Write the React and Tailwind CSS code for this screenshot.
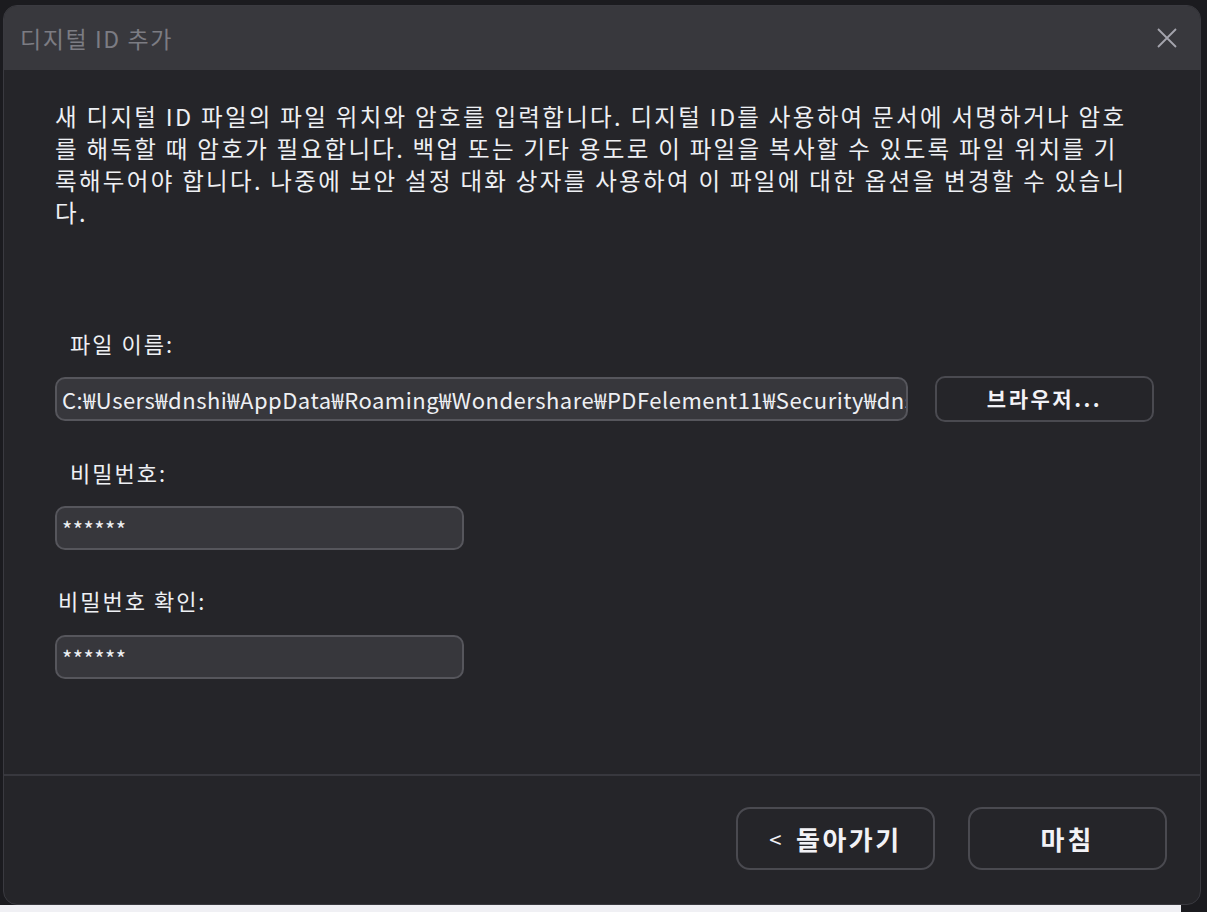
import React from "react";

const font = { fontFamily: '"Noto Sans CJK KR", "Noto Sans", sans-serif' };

const lines = [
  "새 디지털 ID 파일의 파일 위치와 암호를 입력합니다. 디지털 ID를 사용하여 문서에 서명하거나 암호",
  "를 해독할 때 암호가 필요합니다. 백업 또는 기타 용도로 이 파일을 복사할 수 있도록 파일 위치를 기",
  "록해두어야 합니다. 나중에 보안 설정 대화 상자를 사용하여 이 파일에 대한 옵션을 변경할 수 있습니",
  "다.",
];

function Field({ value, className }) {
  return (
    <div
      className={`h-[44px] rounded-[10px] border-2 border-[#56565c] bg-[#37373c] pl-[5px] flex items-center overflow-hidden whitespace-nowrap text-[22px] tracking-[0.5px] text-[#eef0f4] ${className}`}
    >
      {value}
    </div>
  );
}

export default function App() {
  return (
    <div className="w-[1207px] h-[912px] bg-[#1b1b1f] relative overflow-hidden" style={font}>
      <div className="absolute left-0 right-[26px] top-[905px] bottom-0 bg-[#f0f0f4]" />
      <div className="absolute left-[3px] top-[5px] w-[1198px] h-[900px] rounded-[14px] overflow-hidden bg-[#252529] border border-[#3a3a40] flex flex-col">
        {/* title bar */}
        <div className="h-[64px] bg-[#38383d] flex items-center justify-between pl-[16px] pr-[22px] shrink-0">
          <span className="text-[23px] text-[#7c7c83] tracking-[1.6px]">디지털 ID 추가</span>
          <svg width="22" height="22" viewBox="0 0 22 22" className="text-[#a4a4ae]">
            <path d="M2 2 L20 20 M20 2 L2 20" stroke="currentColor" strokeWidth="1.8" fill="none" />
          </svg>
        </div>

        {/* body */}
        <div className="flex-1 flex flex-col pl-[51px] pr-[20px] pt-[30px]">
          <div className="text-[23.5px] leading-[32px] text-[#eef0f4] tracking-[2.3px]">
            {lines.map((l) => (
              <div key={l} className="whitespace-nowrap">{l}</div>
            ))}
          </div>

          <div className="mt-[100px] pl-[15px] text-[22px] leading-[30px] text-[#eef0f4] tracking-[2px]">파일 이름:</div>
          <div className="mt-[18px] flex items-center gap-[27px]">
            <Field
              value="C:₩Users₩dnshi₩AppData₩Roaming₩Wondershare₩PDFelement11₩Security₩dnshi.pfx"
              className="w-[853px]"
            />
            <button className="w-[219px] h-[46px] rounded-[10px] border-2 border-[#4a4a50] bg-[#252529] text-[21px] font-bold text-[#f2f2f6] tracking-[2.5px]">
              브라우저...
            </button>
          </div>

          <div className="mt-[35px] pl-[15px] text-[22px] leading-[30px] text-[#eef0f4] tracking-[2px]">비밀번호:</div>
          <Field value="******" className="mt-[19px] w-[409px]" />

          <div className="mt-[35px] pl-[3px] text-[22px] leading-[30px] text-[#eef0f4] tracking-[2px]">비밀번호 확인:</div>
          <Field value="******" className="mt-[20px] w-[409px]" />
        </div>

        {/* footer */}
        <div className="h-[130px] shrink-0 border-t-2 border-[#38383e] flex items-start justify-end gap-[33px] pt-[31px] pr-[33px]">
          <button className="w-[199px] h-[63px] rounded-[14px] border-2 border-[#4a4a50] text-[26px] font-bold text-[#f2f2f6] tracking-[2.5px] flex items-center justify-center gap-[12px]">
            <span className="font-normal text-[22px]">&lt;</span>
            <span>돌아가기</span>
          </button>
          <button className="w-[199px] h-[63px] rounded-[14px] border-2 border-[#4a4a50] text-[26px] font-bold text-[#f2f2f6] tracking-[3px]">
            마침
          </button>
        </div>
      </div>
    </div>
  );
}
